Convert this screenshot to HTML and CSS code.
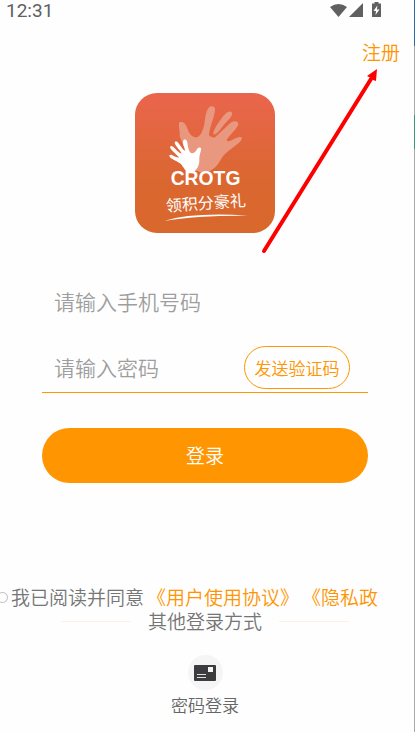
FILE: index.html
```html
<!DOCTYPE html>
<html lang="zh-CN">
<head>
    <meta charset="UTF-8">
    <meta name="viewport" content="width=device-width, initial-scale=1.0">
    <title>登录</title>
    <link rel="stylesheet" href="styles.css">
</head>
<body>
    <div class="app">
        <!-- 状态栏 -->
        <div class="status-bar">
            <span class="time">12:31</span>
            <svg class="status-icons" width="52" height="18" viewBox="0 0 52 18">
                <path d="M0 5 Q8.500 -1 17 5 L8.500 15 Z"/>
                <path d="M19 15 L33 1 V15 Z"/>
                <path d="M42 1.500 H44.500 V0 H48.500 V1.500 H51 V15 H42 Z"/>
                <path class="bolt" d="M47.300 3.500 L43.500 9 H46 L45.500 13 L49.500 7.500 H47 Z"/>
            </svg>
        </div>

        <div class="top-bar">
            <a href="#" class="register">注册</a>
        </div>

        <svg class="logo" viewBox="30 24 420 420" role="img" aria-label="CROTG">
            <defs>
                <linearGradient id="logoBg" x1="0" y1="0" x2="0" y2="1">
                    <stop offset="0" stop-color="#ea654d"/>
                    <stop offset="0.650" stop-color="#da672f"/>
                    <stop offset="1" stop-color="#d9682d"/>
                </linearGradient>
            </defs>
            <rect x="30" y="24" width="420" height="420" rx="66" fill="url(#logoBg)"/>
            <path class="hand-back" d="M163 112 C174 108 183 117 187 130 C193 151 205 158 216 157 C229 151 235 133 238 117 C241 98 243 78 251 68 C258 60 270 63 270 73 C270 94 255 121 252 149 C254 156 262 155 268 158 C284 146 300 128 316 114 C326 106 338 108 340 116 C341 126 317 146 305 164 C306 170 311 169 317 167 C328 162 341 153 349 157 C355 164 340 176 325 187 C305 201 294 211 285 228 C273 249 255 262 232 263 L205 254 L164 154 C166 138 159 123 163 112 Z"/>
            <path class="hand-back" d="M265 148 C264 133 282 110 296 92 C305 81 317 76 321 83 C325 92 307 107 296 120 C286 133 275 151 265 148 Z"/>
            <path class="hand-front" d="M174 168 C178 160 186 164 187 173 C189 184 190 194 195 202 C202 208 210 203 214 196 C217 189 222 185 228 189 C230 196 222 210 223 224 C224 242 213 255 208 260 H185 C178 253 175 246 168 237 C160 230 147 226 136 218 C130 212 134 207 142 211 C150 215 158 219 162 217 C155 209 141 199 136 190 C134 183 139 181 145 186 C154 194 164 206 170 205 C166 197 152 184 149 174 C149 168 156 169 160 174 C168 183 174 196 180 197 C180 189 172 177 174 168 Z"/>
            <text class="logo-name" x="137" y="299">CROTG</text>
            <text class="logo-slogan" x="124" y="380" transform="rotate(-4 124 380)">领积分豪礼</text>
            <path class="hand-front" d="M118 408 Q205 381 369 392 Q215 391 118 408 Z"/>
        </svg>

        <!-- 登录表单 -->
        <form class="login-form">
            <div class="field">
                <input type="tel" placeholder="请输入手机号码" aria-label="手机号码">
            </div>
            <div class="field field-code">
                <input type="password" placeholder="请输入密码" aria-label="密码">
                <button type="button" class="send-code">发送验证码</button>
            </div>
            <button type="submit" class="login-button">登录</button>
        </form>

        <div class="agreement">
            <input type="checkbox" id="agree">
            <label for="agree">我已阅读并同意</label>
            <a href="#">《用户使用协议》</a>
            <a href="#">《隐私政</a>
        </div>

        <!-- 其他登录方式 -->
        <div class="other-title">其他登录方式</div>
        <button type="button" class="password-login">
            <span class="password-icon">
                <svg width="22" height="16" viewBox="0 0 22 16">
                    <rect width="22" height="16" rx="1" fill="#3c3c3e"/>
                    <rect x="14" y="2" width="5" height="5" fill="#f5f5f5"/>
                    <path d="M3 9.500 H12 M3 12.500 H12" stroke="#e0e0e0"/>
                </svg>
            </span>
            密码登录
        </button>

        <!-- 指向注册的箭头 -->
        <svg class="arrow" width="120" height="190" viewBox="0 0 120 190">
            <path d="M4 186 L111 14" stroke="#f00" stroke-width="4" stroke-linecap="round"/>
            <path d="M117 4 L107 11 L111 13 L113 15 L116 16 Z" fill="#f00"/>
        </svg>
    </div>
    <div class="edge"></div>
</body>
</html>
```
FILE: styles.css
```css
* {
    box-sizing: border-box;
}

body {
    font-family: "Noto Sans CJK SC", sans-serif;
    font-weight: 350;
    background-color: #fefefe;
    color: #757575;
    margin: 0;
    display: flex;
    min-height: 100vh;
}

input,
button {
    font: inherit;
    padding: 0;
    border: none;
    background: none;
}

button {
    cursor: pointer;
}

a {
    color: #ff9500;
    text-decoration: none;
}

.app {
    position: relative;
    flex: 1;
    min-width: 0;
    padding-right: 4px;
    display: flex;
    flex-direction: column;
}

/* 屏幕右侧露出的边 */
.edge {
    width: 1px;
    background: linear-gradient(#2d6ca2 46px, #aaa 46px, #aaa 115px, #3c967c 115px, #3c967c 149px, #aaa 149px);
}

.status-bar {
    display: flex;
    justify-content: space-between;
    align-items: center;
    height: 22px;
    padding: 0 28px 0 6px;
}

.time {
    font-family: Roboto, sans-serif;
    font-size: 19px;
    font-weight: 400;
    line-height: 22px;
    color: #606060;
}

.status-icons {
    fill: #606060;
}

.status-icons .bolt {
    fill: #fff;
}

.top-bar {
    display: flex;
    justify-content: flex-end;
    padding: 16px 10px 0;
}

.register {
    font-size: 19px;
    line-height: 28px;
}

.logo {
    width: 140px;
    height: 140px;
    margin: 27px auto 0;
}

.hand-back {
    fill: #e9987f;
}

.hand-front {
    fill: #fff;
}

.logo-name {
    font-family: "Liberation Sans", Arial, sans-serif;
    font-size: 58px;
    font-weight: 700;
    fill: #fff;
}

.logo-slogan {
    font-size: 48px;
    font-weight: 400;
    fill: #fff;
}

.login-form {
    padding: 41px 42px 0;
}

.field {
    display: flex;
    align-items: center;
    height: 56px;
    padding: 0 18px 0 12px;
}

.field input {
    flex: 1;
    min-width: 0;
    padding-bottom: 2px;
    font-size: 21px;
    line-height: 32px;
    outline: none;
}

.field input::placeholder {
    color: #9e9e9e;
    opacity: 1;
}

.field-code {
    height: 50px;
    margin-top: 13px;
    border-bottom: 1px solid #ff9500;
}

.send-code {
    width: 106px;
    height: 43px;
    border: 1px solid #ff9500;
    border-radius: 22px;
    font-size: 17px;
    color: #ff9500;
}

.login-button {
    display: block;
    width: 100%;
    height: 55px;
    margin-top: 35px;
    padding-bottom: 2px;
    border-radius: 28px;
    background-color: #ff9500;
    font-size: 19px;
    color: #fff;
}

.agreement {
    display: flex;
    align-items: center;
    gap: 3px;
    margin-top: 102px;
    font-size: 19px;
    line-height: 24px;
    white-space: nowrap;
}

.agreement input {
    appearance: none;
    flex: none;
    width: 11px;
    height: 11px;
    margin: 0 0 0 -3px;
    border: 1px solid #bbb;
    border-radius: 50%;
}

.other-title {
    display: flex;
    align-items: center;
    justify-content: center;
    gap: 17px;
    font-size: 19px;
    line-height: 24px;
}

.other-title::before,
.other-title::after {
    content: "";
    width: 70px;
    height: 1px;
    background-color: #fdf1e0;
}

.password-login {
    display: flex;
    flex-direction: column;
    align-items: center;
    gap: 3px;
    margin: 22px auto 0;
    font-size: 17px;
    line-height: 24px;
    color: #666;
}

.password-icon {
    display: flex;
    align-items: center;
    justify-content: center;
    width: 35px;
    height: 35px;
    border-radius: 50%;
    background-color: #f5f5f5;
}

.arrow {
    position: absolute;
    top: 65px;
    left: 260px;
    fill: none;
    pointer-events: none;
}
```
